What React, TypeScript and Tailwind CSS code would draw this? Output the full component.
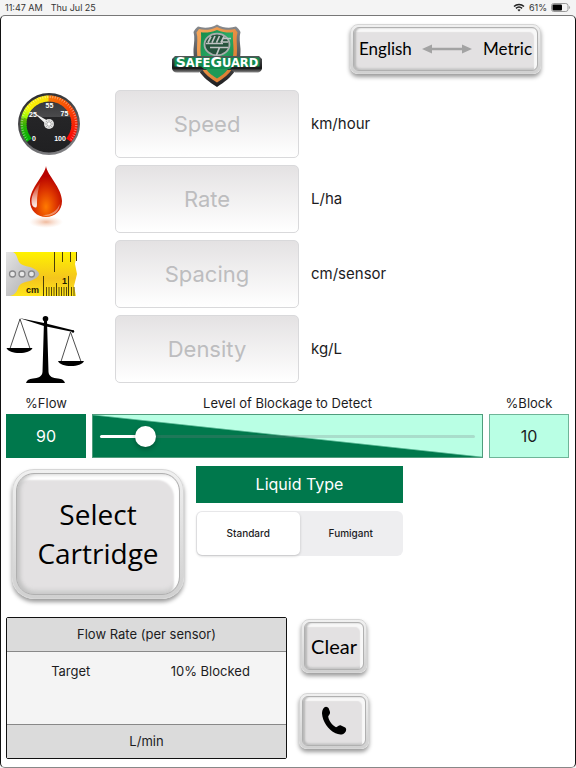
import { useState } from "react";
import type { ReactNode } from "react";
import clsx from "clsx";

function ShieldLogo() {
  return (
    <svg viewBox="0 0 92 64" className="h-16 w-[92px]" role="img" aria-label="SafeGuard">
      <defs>
        <linearGradient id="steel" x1="0" y1="0" x2="0" y2="1">
          <stop offset="0" stopColor="#8b8d90" />
          <stop offset="1" stopColor="#1c1c1e" />
        </linearGradient>
        <linearGradient id="copper" x1="0" y1="0" x2="1" y2="1">
          <stop offset="0" stopColor="#f7a95c" />
          <stop offset="1" stopColor="#d8742a" />
        </linearGradient>
        <linearGradient id="plate" x1="0" y1="0" x2="0" y2="1">
          <stop offset="0" stopColor="#55585a" />
          <stop offset="0.75" stopColor="#161616" />
          <stop offset="1" stopColor="#8c8c8c" />
        </linearGradient>
        <linearGradient id="field" x1="0" y1="0" x2="1" y2="1">
          <stop offset="0" stopColor="#128a4b" />
          <stop offset="0.5" stopColor="#2cab66" />
          <stop offset="1" stopColor="#0f7a40" />
        </linearGradient>
      </defs>
      <path
        d="M46 0.500C40 4 33 4.500 27 2.500C25 4 23.500 6 22.500 8C24 13 23 19 22.500 25C22 43 30 53 46 63C62 53 70 43 69.500 25C69 19 68 13 69.500 8C68.500 6 67 4 65 2.500C59 4.500 52 4 46 0.500Z"
        fill="url(#steel)"
      />
      <path
        d="M46 3C40 6 33 6.500 28 5L25.500 8.500C27 13 26 19 26 25C25.500 41 32 50 46 58.500C60 50 66.500 41 66 25C66 19 65 13 66.500 8.500L64 5C59 6.500 52 6 46 3Z"
        fill="url(#copper)"
      />
      <path
        d="M46 6C40 8.500 34 9 30 8.300C30.500 14 29.500 20 29.500 26C29.500 39 35 47 46 54C57 47 62.500 39 62.500 26C62.500 20 61.500 14 62 8.300C58 9 52 8.500 46 6Z"
        fill="url(#field)"
      />
      <ellipse cx="46" cy="20.500" rx="12.500" ry="10.800" fill="#26533d" stroke="#a9adad" strokeWidth="1.800" />
      <path
        d="M37 18.500L40 12.500M41 18.500L44 12M45.500 18.500L48.500 12M50 18.500L53 12.500M35 19.500H52M53 14.500H60M51.500 18H57M39 23.500H57M48.500 23.500L45.500 31"
        stroke="#c0c4c4"
        strokeWidth="1.700"
        fill="none"
      />
      <path
        d="M4 32H88L91 35V44C91 46.500 89 48.500 86 48.500H64L60 46H32L28 48.500H6C3 48.500 1 46.500 1 44V35Z"
        fill="url(#plate)"
      />
      <path d="M3.500 33.500H88.500V42.500H62L59 45H33L30 42.500H3.500Z" fill="#138a4e" />
      <path d="M35 45C38 49.500 42 52 46 54.500C50 52 54 49.500 57 45Z" fill="#1f9a57" />
      <text
        x="46"
        y="42.500"
        textAnchor="middle"
        fill="#fff"
        fontFamily="DejaVu Sans, sans-serif"
        fontWeight="700"
        fontSize="11.500"
      >
        <tspan fontSize="14">S</tspan>AFE<tspan fontSize="14">G</tspan>UARD
      </text>
    </svg>
  );
}

// Points on the dial, angle in degrees clockwise from twelve o'clock
function dial(angle: number, r: number) {
  const a = (angle * Math.PI) / 180;
  return [32 + r * Math.sin(a), 32 - r * Math.cos(a)];
}

function dialHue(t: number) {
  if (t < 0.12) return 120 - t * 100;
  if (t < 0.3) return 108 - (t - 0.12) * 270;
  if (t < 0.5) return 58 - (t - 0.3) * 20;
  return 28 - (t - 0.5) * 56;
}

function GaugeIcon() {
  const steps = Array.from({ length: 48 }, (_, i) => i);
  return (
    <svg viewBox="0 0 64 64" className="size-16" aria-hidden="true">
      <defs>
        <linearGradient id="rim" x1="0.300" y1="0" x2="0.700" y2="1">
          <stop offset="0" stopColor="#2c2c2e" />
          <stop offset="0.500" stopColor="#505053" />
          <stop offset="1" stopColor="#858588" />
        </linearGradient>
        <linearGradient id="face" x1="0" y1="0" x2="0" y2="1">
          <stop offset="0" stopColor="#303033" />
          <stop offset="0.370" stopColor="#4a4a4c" />
          <stop offset="0.380" stopColor="#252527" />
          <stop offset="1" stopColor="#202022" />
        </linearGradient>
      </defs>
      <circle cx="32" cy="32" r="31" fill="url(#rim)" />
      <circle cx="32" cy="32" r="28.500" fill="url(#face)" />
      {steps.map((i) => {
        const t = i / 47;
        const angle = -126 + t * 252;
        const [x1, y1] = dial(angle, 22.5);
        const [x2, y2] = dial(angle, 28.5);
        return (
          <line
            key={i}
            x1={x1}
            y1={y1}
            x2={x2}
            y2={y2}
            stroke={`hsl(${dialHue(t)} 95% ${t < 0.2 ? 36 : 50}%)`}
            strokeWidth="3.200"
          />
        );
      })}
      {steps.map((i) => {
        const angle = -125 + (i / 47) * 250;
        const [x1, y1] = dial(angle, 26);
        const [x2, y2] = dial(angle, 28.5);
        return <line key={i} x1={x1} y1={y1} x2={x2} y2={y2} stroke="#fff" strokeOpacity="0.600" strokeWidth="0.700" />;
      })}
      <g fill="#fff" fontFamily="Liberation Sans, sans-serif" fontWeight="700" fontSize="7" textAnchor="middle">
        <text x="16" y="24.500">25</text>
        <text x="32.500" y="15.500">55</text>
        <text x="47.500" y="24">75</text>
        <text x="17" y="48.500">0</text>
        <text x="43" y="48.500">100</text>
      </g>
      <path d="M17 21L33 30L31 34Z" fill="#f0f0f0" />
      <circle cx="32" cy="32" r="5" fill="#e2e2e2" />
      <path d="M32 27.500V36.500M27.500 32H36.500M29 29L35 35M35 29L29 35" stroke="#a3a3a3" strokeWidth="0.800" />
      <circle cx="32" cy="32" r="1.500" fill="#fff" />
    </svg>
  );
}

function DropIcon() {
  return (
    <svg viewBox="0 0 40 66" className="h-[66px] w-10" aria-hidden="true">
      <defs>
        <radialGradient id="blood" cx="0.500" cy="0.800" r="0.600">
          <stop offset="0" stopColor="#ff7a00" />
          <stop offset="0.550" stopColor="#dd3500" />
          <stop offset="1" stopColor="#b80300" />
        </radialGradient>
        <linearGradient id="gloss" x1="0" y1="0" x2="0" y2="1">
          <stop offset="0" stopColor="#fff" stopOpacity="0.050" />
          <stop offset="1" stopColor="#fff" stopOpacity="0.950" />
        </linearGradient>
        <radialGradient id="pool">
          <stop offset="0" stopColor="#f0b99c" />
          <stop offset="1" stopColor="#f8d9c8" stopOpacity="0" />
        </radialGradient>
      </defs>
      <ellipse cx="20" cy="56" rx="17" ry="6" fill="url(#pool)" />
      <path
        d="M20 0C21 9 36 22 36 35C36 44.500 29 51 20 51C11 51 4 44.500 4 35C4 22 19 9 20 0Z"
        fill="url(#blood)"
      />
      <path d="M14.500 16C9 23 5.500 29 5.500 35C5.500 38.500 6.800 41 9 41.500C11 42 11 40 11 37C11 30 12 23 14.500 16Z" fill="url(#gloss)" />
      <path d="M13 48C20 51 31 47 33.500 38C34 45 28 50 20 50Z" fill="#fff" fillOpacity="0.400" />
    </svg>
  );
}

function TapeIcon() {
  return (
    <svg viewBox="0 0 72 44" className="h-11 w-[72px]" aria-hidden="true">
      <defs>
        <linearGradient id="tape" x1="0" y1="0" x2="0" y2="1">
          <stop offset="0" stopColor="#fff200" />
          <stop offset="0.600" stopColor="#f4c51d" />
          <stop offset="1" stopColor="#ffe51a" />
        </linearGradient>
        <linearGradient id="hook" x1="0" y1="0" x2="1" y2="1">
          <stop offset="0" stopColor="#e4e4e4" />
          <stop offset="1" stopColor="#a8a8aa" />
        </linearGradient>
      </defs>
      <path d="M0 0H71L69 12L71 22L68 34L70 44H0Z" fill="url(#tape)" />
      <path
        d="M0 0H7C11 2 11 6 13 10C15 13 19 14 24 15C30 17 33 20 33 22C33 24 30 27 24 29C19 30 15 31 13 34C11 38 11 42 4 44H0Z"
        fill="url(#hook)"
      />
      <g fill="#e8e8e8" stroke="#88888a" strokeWidth="1.300">
        <circle cx="6.500" cy="22" r="3" />
        <circle cx="16" cy="22" r="3" />
        <circle cx="25.500" cy="22" r="3" />
      </g>
      <path
        d="M48.500 0V20M56.500 0V10M64.500 0V10M70.500 0V9M37.500 24V44M62.500 24V44M50.500 31V44"
        stroke="#4a3e08"
        strokeWidth="1"
      />
      <path
        d="M40.500 35V44M43 35V44M45.500 35V44M48 35V44M53 35V44M55.500 35V44M58 35V44M60.500 35V44M65.500 35V44M68 35V44"
        stroke="#5d4e0a"
        strokeWidth="1"
      />
      <g fill="#1f1a00" fontFamily="Liberation Sans, sans-serif" fontWeight="700">
        <text x="20" y="41" fontSize="9">cm</text>
        <text x="56" y="32" fontSize="9">1</text>
      </g>
    </svg>
  );
}

function ScaleIcon() {
  return (
    <svg viewBox="0 0 78 68" className="h-[68px] w-[78px]" aria-hidden="true">
      <circle cx="39.500" cy="3.800" r="2.800" />
      <path d="M38 6H41L42.500 57C43 62 47 63 52 63.500C56 64 58 65 59 68H20C21 65 23 64 27 63.500C32 63 36 62 36.500 57Z" />
      <path d="M13 3L38 8L68 15.500L67 17L38 11Z" />
      <circle cx="67" cy="16.500" r="1.200" />
      <path d="M14 4L4 33.500M14 4L24 33.500M64.500 17L55 46.500M64.500 17L75 46.500" stroke="#222" strokeWidth="0.800" fill="none" />
      <path d="M0.500 33H26.500C25 36.500 20 38 13.500 38C7 38 2 36.500 0.500 33ZM52 46H78C76.500 49.500 71.500 51 65 51C58.500 51 53.500 49.500 52 46Z" />
    </svg>
  );
}

function PhoneIcon() {
  return (
    <svg viewBox="0 0 26 30" className="h-[30px] w-[26px]" role="img" aria-label="Call">
      <path d="M3.500 1.200C5 0 6.800 0.800 7.800 2.500L9 6C9.500 8 7.600 9 7.200 10.500C7.600 14.500 11 19 15 21.300C17 21 18 18.800 20 19.500L24.200 21.500C25.700 22.500 25.200 24.500 24.600 25.700C22.500 29.200 18 29 14.500 27.300C7 23.500 1.600 15.500 1 7.500C1 5 1.700 2.500 3.500 1.200Z" />
    </svg>
  );
}

interface BevelButtonProps {
  className?: string;
  large?: boolean;
  onClick?: () => void;
  children: ReactNode;
}

function BevelButton({ className, large, onClick, children }: BevelButtonProps) {
  return (
    <button
      type="button"
      onClick={onClick}
      className={clsx(
        "flex border border-[#d6d6d6] bg-linear-to-b from-[#f0f0f0] to-[#d0d0d0] text-black shadow-[0_3px_4px_rgba(0,0,0,0.4)]",
        large ? "rounded-[22px] p-[3px]" : "rounded-lg p-[2px]",
        className
      )}
    >
      <span
        className={clsx(
          "flex flex-1 items-center justify-center self-stretch border border-[#b0b0b0] bg-[#e3e1e2]",
          large
            ? "rounded-[18px] shadow-[inset_3px_0_4px_#c0c0c0,inset_-5px_6px_2px_#fff,inset_0_-4px_4px_#d0d0d0]"
            : "rounded-md shadow-[inset_2px_0_2px_#b8b8b8,inset_-3px_4px_1px_#f8f8f8,inset_0_-2px_2px_#ccc]"
        )}
      >
        {children}
      </span>
    </button>
  );
}

const fields = [
  { name: "Speed", metric: "km/hour", english: "mph", icon: <GaugeIcon />, pad: "pl-[11px]" },
  { name: "Rate", metric: "L/ha", english: "gal/ac", icon: <DropIcon />, pad: "pl-5" },
  { name: "Spacing", metric: "cm/sensor", english: "in/sensor", icon: <TapeIcon />, pad: "pl-0" },
  { name: "Density", metric: "kg/L", english: "lb/gal", icon: <ScaleIcon />, pad: "pl-0" },
];

const emptyValues: Record<string, string> = { Speed: "", Rate: "", Spacing: "", Density: "" };

export default function App() {
  const [metric, setMetric] = useState(true);
  const [values, setValues] = useState(emptyValues);
  const [block, setBlock] = useState(10);
  const [liquid, setLiquid] = useState("Standard");

  return (
    <div className="flex min-h-screen flex-col bg-[#f4f4f4] font-['Inter','Liberation_Sans',sans-serif] text-[#1c1c1e]">
      <header className="flex h-[15px] items-center justify-between px-[5px] text-[9px] text-[#333]">
        <div className="flex gap-2">
          <span>11:47 AM</span>
          <span>Thu Jul 25</span>
        </div>
        <div className="flex items-center gap-1">
          <svg viewBox="0 0 12 9" className="h-[9px] w-3" aria-hidden="true">
            <path d="M1 3.500C3.800 0.800 8.200 0.800 11 3.500M2.900 5.400C4.700 3.800 7.300 3.800 9.100 5.400" fill="none" stroke="#222" strokeWidth="1.500" />
            <path d="M4.400 6.800C5.300 6 6.700 6 7.600 6.800L6 8.500Z" fill="#222" />
          </svg>
          <span>61%</span>
          <svg viewBox="0 0 20 9" className="h-[9px] w-5" aria-hidden="true">
            <rect x="0.500" y="0.500" width="16.500" height="8" rx="2.200" fill="none" stroke="#999" />
            <rect x="1.500" y="1.500" width="9.500" height="6" rx="1" />
            <path d="M18.200 3V6C19.400 5.500 19.400 3.500 18.200 3Z" fill="#999" />
          </svg>
        </div>
      </header>

      <main className="flex-1 rounded-[5px] border border-t-[#777] border-r-[#111] border-b-[#888] border-l-[#111] bg-white pr-1.5 pb-[7px] pl-[5px]">
        <div className="flex h-[74px] items-start justify-between pt-2 pr-7 pl-[165px]">
          <ShieldLogo />
          <BevelButton
            className="h-[50px] w-[191px] font-['Lato','Open_Sans',sans-serif]"
            onClick={() => setMetric(!metric)}
          >
            <span className="flex flex-1 items-center justify-between px-[5px] text-[17px]">
              <span>English</span>
              <svg viewBox="0 0 50 10" className="h-[10px] w-[50px]" aria-hidden="true">
                <path d="M0 5L10 0.500V3.700H40V0.500L50 5L40 9.500V6.300H10V9.500Z" fill="#a3a3a3" />
              </svg>
              <span>Metric</span>
            </span>
          </BevelButton>
        </div>

        <div className="flex flex-col gap-[7px]">
          {fields.map((f) => (
            <label key={f.name} className="grid h-[68px] grid-cols-[109px_184px_1fr] items-center">
              <span className={f.pad}>{f.icon}</span>
              <input
                type="text"
                inputMode="decimal"
                aria-label={f.name}
                placeholder={f.name}
                value={values[f.name]}
                onChange={(e) => setValues({ ...values, [f.name]: e.target.value })}
                className="h-full w-full rounded-[5px] border border-[#d9d9db] bg-linear-to-b from-[#e4e2e3] to-white text-center text-[22px] placeholder:text-[#bdbdbf]"
              />
              <span className="pl-3 text-[15px]">{metric ? f.metric : f.english}</span>
            </label>
          ))}
        </div>

        <div className="mt-2.5 grid grid-cols-[80px_1fr_80px] gap-x-1.5 gap-y-px text-center">
          <div className="text-[13px] leading-5">%Flow</div>
          <label htmlFor="blockage" className="text-[13px] leading-5">
            Level of Blockage to Detect
          </label>
          <div className="text-[13px] leading-5">%Block</div>
          <output className="flex h-11 items-center justify-center bg-[#00784c] text-base text-white">
            {100 - block}
          </output>
          <div className="flex h-11 items-center border border-[#4f9c7c] bg-[linear-gradient(to_bottom_left,#b9ffe4_49%,#00784c_51%)] px-[7px]">
            <input
              id="blockage"
              type="range"
              min={0}
              max={100}
              value={block}
              onChange={(e) => setBlock(Number(e.target.value))}
              style={{
                backgroundImage: `linear-gradient(to right, #fff ${block}%, rgba(120,120,128,0.25) ${block}%)`,
              }}
              className="h-[3px] w-full appearance-none rounded-full [&::-webkit-slider-thumb]:size-[21px] [&::-webkit-slider-thumb]:appearance-none [&::-webkit-slider-thumb]:rounded-full [&::-webkit-slider-thumb]:bg-white [&::-webkit-slider-thumb]:shadow-[0_2px_5px_rgba(0,0,0,0.3)]"
            />
          </div>
          <output className="flex h-11 items-center justify-center border border-[#6fb598] bg-[#b9ffe4] text-base">
            {block}
          </output>
        </div>

        <div className="mt-2 flex items-start gap-3">
          <BevelButton
            large
            className="mt-[3px] ml-1.5 h-[130px] w-[172px] font-['Open_Sans','Noto_Sans',sans-serif] text-[28px] leading-[39px]"
          >
            <span>
              Select
              <br />
              Cartridge
            </span>
          </BevelButton>
          <fieldset className="w-[207px]">
            <legend className="mb-2 h-[37px] w-full bg-[#00784c] text-center text-base leading-[37px] text-white">
              Liquid Type
            </legend>
            <div className="grid h-[45px] grid-cols-2 rounded-md bg-[#eeeef0] p-px text-[10px] font-medium">
              {["Standard", "Fumigant"].map((type) => (
                <label
                  key={type}
                  className={clsx(
                    "flex items-center justify-center rounded-[5px]",
                    liquid === type && "bg-white shadow-[0_1px_3px_rgba(0,0,0,0.2)]"
                  )}
                >
                  <input
                    type="radio"
                    name="liquid"
                    value={type}
                    checked={liquid === type}
                    onChange={() => setLiquid(type)}
                    className="sr-only"
                  />
                  {type}
                </label>
              ))}
            </div>
          </fieldset>
        </div>

        <div className="mt-[18px] flex gap-3">
          <table className="h-[142px] w-[281px] table-fixed border-separate border-spacing-0 rounded-xs border border-[#111] bg-[#f4f4f4] text-center text-[13px]">
            <thead>
              <tr className="h-[34px] bg-[#dbdbdb]">
                <th colSpan={2} className="border-b border-[#888] font-normal">
                  Flow Rate (per sensor)
                </th>
              </tr>
            </thead>
            <tbody>
              <tr className="align-top">
                <td className="pt-2.5 pr-3">Target</td>
                <td className="pt-2.5 pr-3">{block}% Blocked</td>
              </tr>
            </tbody>
            <tfoot>
              <tr className="h-[34px] bg-[#dbdbdb]">
                <td colSpan={2} className="border-t border-[#888]">
                  {metric ? "L/min" : "gal/min"}
                </td>
              </tr>
            </tfoot>
          </table>
          <div className="flex flex-col items-center gap-5 pt-0.5">
            <BevelButton
              className="h-[54px] w-[66px] font-['Lato','Open_Sans',sans-serif] text-xl"
              onClick={() => setValues(emptyValues)}
            >
              Clear
            </BevelButton>
            <BevelButton className="h-[56px] w-[70px]">
              <PhoneIcon />
            </BevelButton>
          </div>
        </div>
      </main>
    </div>
  );
}
